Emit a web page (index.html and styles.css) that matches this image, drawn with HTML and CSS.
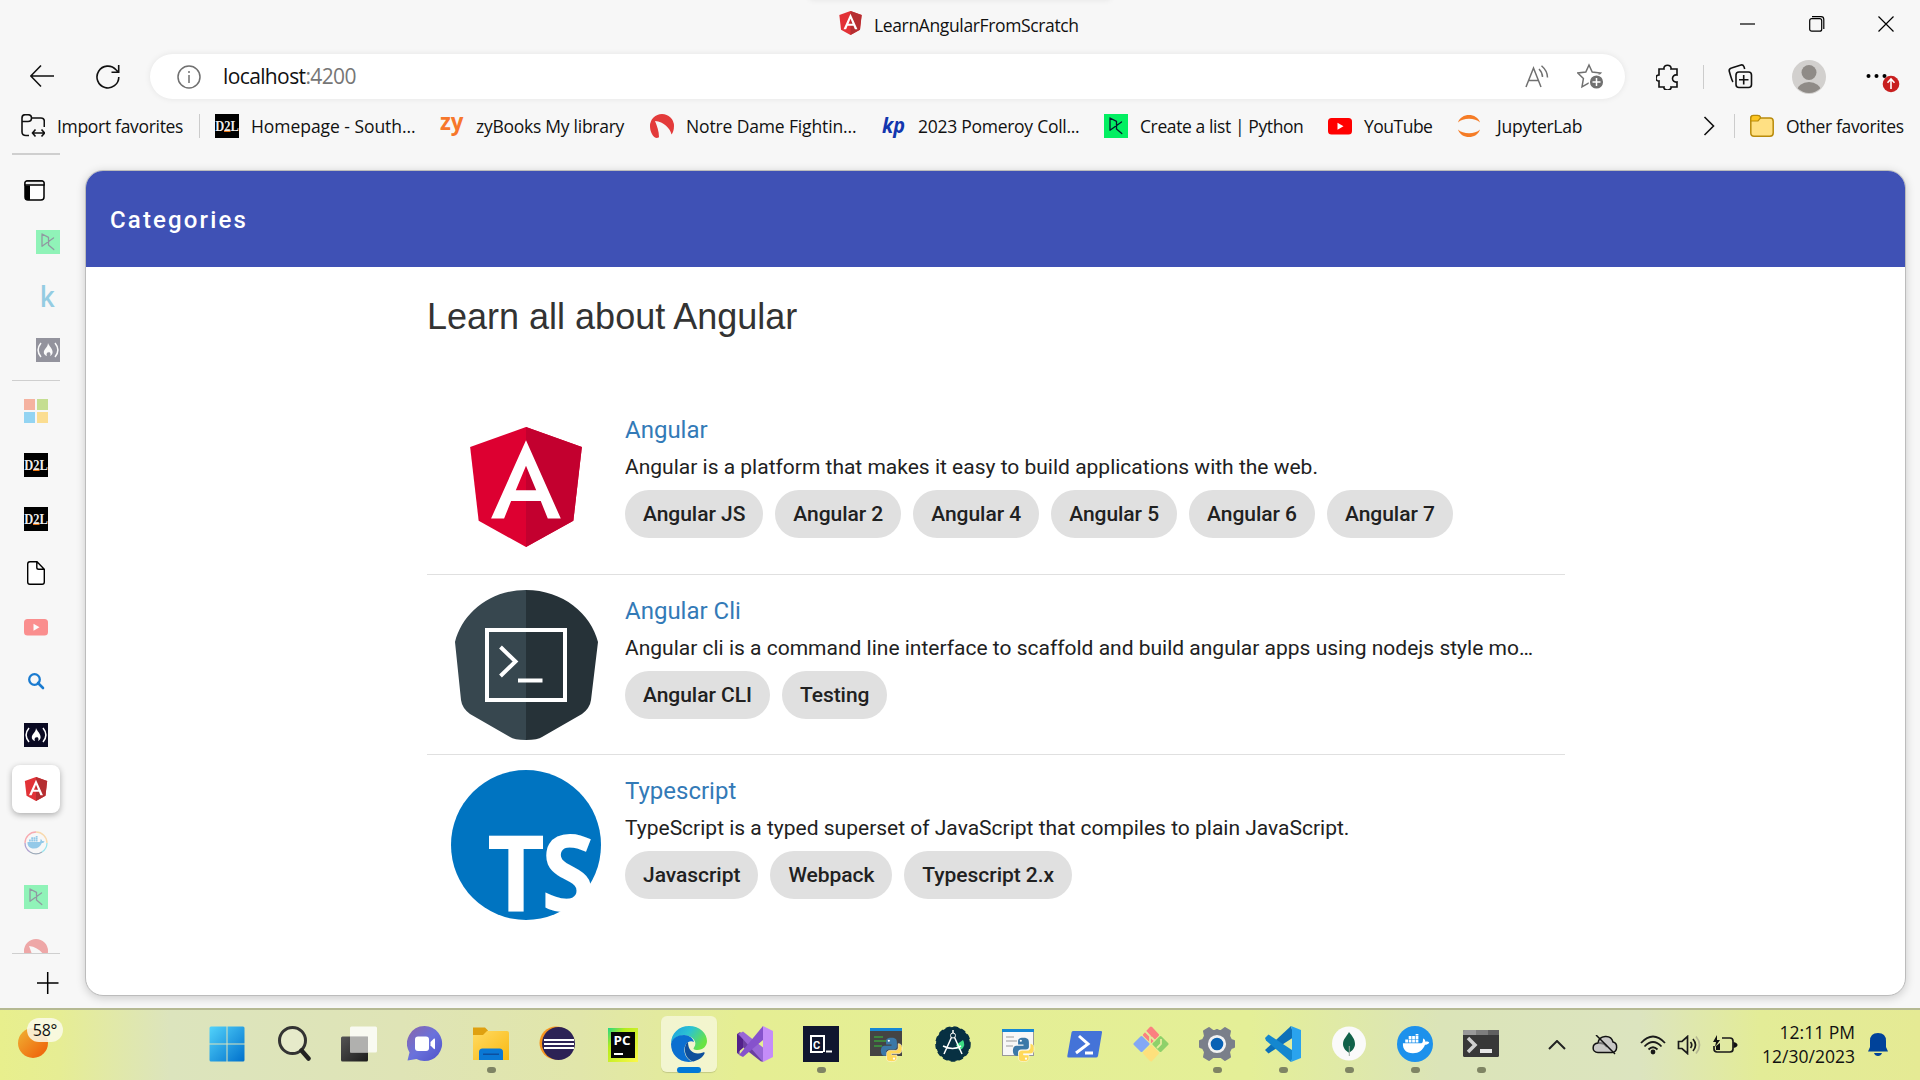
FILE: index.html
```html
<!DOCTYPE html>
<html lang="en">
<head>
<meta charset="utf-8">
<title>LearnAngularFromScratch</title>
<link rel="stylesheet" href="styles.css">
</head>
<body>
<svg class="defs" width="0" height="0" aria-hidden="true">
  <symbol id="angular" viewBox="30 30 190 200"><path fill="#e23237" d="M125 30 31.900 63.200l14.200 123.100L125 230l78.900-43.700 14.200-123.100z"/><path fill="#b52e31" d="M125 30v200l78.900-43.700 14.200-123.100z"/><path fill="#fff" d="M125 52 67 182.600h21.700l11.700-29.200h49.400l11.700 29.200H183zm17 83.400h-34l17-41z"/></symbol>
  <symbol id="dc" viewBox="0 0 24 24"><rect width="24" height="24" fill="#03ef62"/><path d="M6 4v12.300L17.500 8M6 4l6.500 3.300V15l5.300 4.600" fill="none" stroke="#05192d" stroke-width="1.300" stroke-linejoin="round" stroke-linecap="round"/></symbol>
  <symbol id="d2l" viewBox="0 0 24 24"><rect width="24" height="24"/><rect x="9" y="16" width="6.500" height="2" fill="#e87511"/><text x="0.200" y="17" textLength="23.600" lengthAdjust="spacingAndGlyphs" font-family="Liberation Serif, serif" font-size="14" font-weight="bold" fill="#eee">D2L</text></symbol>
  <symbol id="fcc" viewBox="0 0 24 24"><rect width="24" height="24" fill="#0a0a23"/><path d="M5 5Q-.800 12 5 19M19 5q5.800 7 0 14" fill="none" stroke="#fff" stroke-width="1.500"/><path fill="#fff" d="M12 5c1 3 5 6 4.600 9.500-.200 2-1.300 3-2.600 3.500 1-2 .500-3-.600-4-.400 1-.800 1-1-.200C10.800 15 10 16 11 18c-2-.500-3.400-2-3.200-4 .200-3 4-4.500 4.200-9z"/></symbol>
  <symbol id="yt" viewBox="0 0 24 24"><rect y="4" width="24" height="16.500" rx="3.500" fill="#f00"/><path fill="#fff" d="m9.500 8.700 6 3.500-6 3.500z"/></symbol>
  <symbol id="nd" viewBox="0 0 24 24"><path fill="#e33b3b" d="M0 12a12 12 0 0 1 24 0c0 4-1 6.500-2.500 8.500C20 14 14 8 5 7c2 5 4 10 4 16.200-1.500 1-3 1-4 .300C1.500 21 0 16 0 12z"/></symbol>
  <symbol id="python" viewBox="0 0 30 30"><path fill="#3b78a8" d="M15 1C8 1 8.500 4 8.500 7v2H15v1.500H6c-5 0-5 12 0 12h2.500v-4c0-2 1.500-3.500 3.500-3.500h6c2 0 3.500-1 3.500-3V7c0-3-.500-6-6.500-6z"/><path fill="#ffd95a" stroke="#fff" stroke-width=".6" d="M15 29.500c7 0 6.500-3 6.500-6v-2H15V20h9c5 0 5-12 0-12h-1v4.500c0 2-1.500 3.500-3.500 3.500h-6C11 16 9 17.500 9 20v4c0 3 0 5.500 6 5.500z"/><circle cx="11.800" cy="4.500" r="1.300" fill="#fff"/><circle cx="18" cy="26" r="1.300" fill="#fff"/></symbol>
  <symbol id="whale" viewBox="0 0 36 26"><path d="M1 12h24c2 0 2-3 2.200-6 2 .800 3 2.500 3 4 1.800-.500 4-.200 5 1-1.400 2.500-3.500 3-5.500 3C27 21 22 25 14 25 5 25 .500 20 1 12zM4 7h3.600v4H4zm4.500 0h3.600v4H8.500zM13 7h3.600v4H13zm4.500 0h3.600v4h-3.600zM8.500 2.700h3.600v3.700H8.500zm4.500 0h3.600v3.700H13zm4.500 0h3.600v3.700h-3.600zm0-2.700h3.600v2h-3.600z"/></symbol>
  <linearGradient id="gwin" x1="0" y1="0" x2="1" y2="1"><stop offset="0" stop-color="#52d3fb"/><stop offset="1" stop-color="#0070cc"/></linearGradient>
  <linearGradient id="gchat" x1="0" y1="0" x2="1" y2="1"><stop offset="0" stop-color="#8a64a8"/><stop offset=".5" stop-color="#6a72dc"/><stop offset="1" stop-color="#4f52c8"/></linearGradient>
  <linearGradient id="gfold" x1="0" y1="0" x2="1" y2="1"><stop offset="0" stop-color="#ffda62"/><stop offset="1" stop-color="#f9b912"/></linearGradient>
  <linearGradient id="gdark" x1="0" y1="0" x2="1" y2="1"><stop offset="0" stop-color="#555"/><stop offset="1" stop-color="#1c1c1c"/></linearGradient>
  <linearGradient id="gedge" x1="0" y1="0" x2="1" y2=".5"><stop offset="0" stop-color="#1b9de2"/><stop offset=".5" stop-color="#2cc3d2"/><stop offset="1" stop-color="#68e344"/></linearGradient>
  <linearGradient id="gsun" x1="0" y1="0" x2="1" y2="1"><stop offset="0" stop-color="#f0b435"/><stop offset=".8" stop-color="#ef6c0f"/></linearGradient>
  <linearGradient id="gpc" x1="0" y1="0" x2="1" y2="1"><stop offset="0" stop-color="#21d789"/><stop offset=".3" stop-color="#b6ec1b"/><stop offset="1" stop-color="#fcf84a"/></linearGradient>
</svg>

<header class="chrome">
  <div class="titlebar">
    <div class="peek"></div>
    <div class="page-title"><svg width="23" height="24"><use href="#angular"/></svg><span>LearnAngularFromScratch</span></div>
    <div class="window-buttons">
      <svg width="16" height="16" class="line"><path d="M0 8h15"/></svg>
      <svg width="16" height="16" class="line"><rect x=".7" y="2.700" width="12" height="12.500" rx="2"/><path d="M3 .700h9q2.800 0 2.800 2.800V13"/></svg>
      <svg width="16" height="16" class="line"><path d="m.500.500 15 15m0-15-15 15"/></svg>
    </div>
  </div>

  <div class="toolbar">
    <svg class="back line2" width="24" height="24"><path d="M11 1.500.800 12 11 22.500M.800 12H24"/></svg>
    <svg class="reload line2" width="24" height="24"><path d="M22.800 12A10.900 10.900 0 1 1 20 4.700l2.500 2.500M22.700 0v7.300h-7.200"/></svg>
    <div class="address">
      <svg width="24" height="24" class="info"><circle cx="12" cy="12" r="11"/><path d="M12 10v8M12 6v2"/></svg>
      <span class="url">localhost<i>:4200</i></span>
      <svg width="24" height="24" class="read"><path d="m1 22 7.500-19L16 22M3.500 15.500h10M14 4q3.500 3.500 3.500 8M16.500.800Q22.500 6 22.500 12.500"/></svg>
      <svg width="27" height="27" class="star"><path d="m12 2 3.200 7 8.300 1-6 5.500 1.500 8-7-3.700-7 4 1.400-8.300L.800 10l8-1z"/><circle cx="19.500" cy="19" r="7.300" fill="#707070" stroke="#fff"/><path stroke="#fff" d="M15.500 19h8m-4-4v8"/></svg>
    </div>
    <svg class="ext line2" width="24" height="26"><path d="M3 5h5c-1-5 8-5 7 0h6v6c-6-1-6 8 0 7v5h-6c1 4-8 4-7 0H3v-6c-4 .500-4-6 0-6z"/></svg>
    <i class="vr"></i>
    <svg class="collect line2" width="26" height="26"><rect x="8" y="8" width="15.500" height="15.500" rx="3"/><path d="M15.700 11v9.500M11 15.700h9.500M5 18Q4 17 1.200 7 1 4.500 3.500 4L13 1q2-.500 3 1.800l.700 2.200"/></svg>
    <svg class="avatar" width="34" height="34"><clipPath id="av"><circle cx="17" cy="17" r="16"/></clipPath><circle cx="17" cy="17" r="17" fill="#d2d0ce"/><g clip-path="url(#av)" fill="#8f8b87"><circle cx="17" cy="12.500" r="7.500"/><ellipse cx="17" cy="31" rx="12" ry="9"/></g></svg>
    <svg class="more" width="34" height="26"><circle cx="2.500" cy="9" r="2"/><circle cx="10.500" cy="9" r="2"/><circle cx="18.500" cy="9" r="2"/><circle cx="25" cy="17" r="8.300" fill="#c81f1f"/><path d="M25 22v-9.500m-3.500 3.300L25 12l3.500 3.800" stroke="#fff" stroke-width="1.600" fill="none"/></svg>
  </div>

  <nav class="bookmarks">
    <a class="w1"><svg width="24" height="24" class="line2"><path d="M8 21.500H5Q1 21.500 1 18V4Q1 .700 4 .700h3Q10.500.700 10.500 4H20q3.300 0 3.300 3.300V13M1 7.500h6q3.500 0 3.500-3.500M11.500 19h12m-9-3.500L11.500 19l3 3.500m6-7 3 3.500-3 3.500"/></svg><span class="s1">Import favorites</span></a>
    <i class="vr"></i>
    <a class="w2"><svg width="24" height="24"><use href="#d2l"/></svg><span class="s2">Homepage - South...</span></a>
    <a class="w3"><svg width="24" height="24"><text x="0" y="16" textLength="23.500" lengthAdjust="spacingAndGlyphs" font-family="Open Sans, sans-serif" font-size="24" font-weight="bold" fill="#f7772b">zy</text></svg><span class="s3">zyBooks My library</span></a>
    <a class="w4"><svg width="24" height="24"><use href="#nd"/></svg><span class="s4">Notre Dame Fightin...</span></a>
    <a class="w5"><svg width="24" height="24"><text x="0" y="19" textLength="23" lengthAdjust="spacingAndGlyphs" font-family="Open Sans, sans-serif" font-size="21" font-style="italic" font-weight="bold" fill="#1236ae">kp</text></svg><span class="s5">2023 Pomeroy Coll...</span></a>
    <a class="w6"><svg width="24" height="24"><use href="#dc"/></svg><span class="s6">Create a list | Python</span></a>
    <a class="w7"><svg width="24" height="24"><use href="#yt"/></svg><span class="s7">YouTube</span></a>
    <a class="w8"><svg width="24" height="24"><path fill="#f57c26" d="M1 8.500C4-1.500 20-1.500 23 8.500 18 3.500 6 3.500 1 8.500zm0 7c5 5 17 5 22 0-3 10-19 10-22 0z"/></svg><span class="s8">JupyterLab</span></a>
    <svg width="12" height="20" class="line2 chev"><path d="m1.500 1 9 9-9 9"/></svg>
    <i class="vr"></i>
    <a class="w9"><svg width="24" height="24"><path fill="#ffe083" stroke="#b98b0c" stroke-width="1.500" d="M.800 4.500Q.800 1.500 3.500 1.500h4Q10 1.500 10 4h10q3.200 0 3.200 3.200V19q0 3.200-3.200 3.200H4Q.800 22.200.800 19z"/><path fill="#fcc520" stroke="#b98b0c" stroke-width="1.200" d="M.800 7V4.500q0-3 2.700-3h4Q10.500 1.500 10.500 4L8 7z"/></svg><span class="s9">Other favorites</span></a>
  </nav>
</header>

<div class="workspace">
  <aside class="tabs">
    <hr class="thick">
    <div class="tab-toggle"><svg width="22" height="22"><rect x="1" y="1" width="19" height="19" rx="3" fill="#fff" stroke="#000" stroke-width="1.500"/><path d="M1 5h19v-2q0-2-2-2H3Q1 1 1 3z" fill="#eee" stroke="#000" stroke-width="1.300"/><path d="M1 5.500h5V20H3q-2 0-2-2z"/></svg></div>
    <div class="tab pinned faded"><svg width="24" height="24"><use href="#dc"/></svg></div>
    <div class="tab pinned"><svg width="24" height="24"><text x="3.800" y="22.500" font-family="Open Sans, sans-serif" font-size="28" font-weight="600" textLength="15" lengthAdjust="spacingAndGlyphs" fill="#94cce2">k</text></svg></div>
    <div class="tab pinned faded"><svg width="24" height="24"><use href="#fcc"/></svg></div>
    <hr class="mid">
    <div class="tab-list">
      <div class="tab"><svg width="24" height="24"><path fill="#f5b2a0" d="M0 0h11v11H0z"/><path fill="#c5de91" d="M13 0h11v11H13z"/><path fill="#93d4f2" d="M0 13h11v11H0z"/><path fill="#fbdd91" d="M13 13h11v11H13z"/></svg></div>
      <div class="tab"><svg width="24" height="24"><use href="#d2l"/></svg></div>
      <div class="tab"><svg width="24" height="24"><use href="#d2l"/></svg></div>
      <div class="tab"><svg width="24" height="24"><path d="M3.700 3q0-2.200 2.200-2.200H13l7.300 7.500V21q0 2.200-2.200 2.200H5.900Q3.700 23.200 3.700 21zM12.800 1v5.500q0 1.800 1.800 1.800h5.500" fill="#fff" stroke="#000" stroke-width="1.400"/></svg></div>
      <div class="tab faded"><svg width="24" height="24"><use href="#yt"/></svg></div>
      <div class="tab"><svg width="24" height="24"><circle cx="10.500" cy="10.500" r="5.300" fill="none" stroke="#1a7bd0" stroke-width="2.300"/><path d="m14 14 5 5" stroke="#1a7bd0" stroke-width="2.600" stroke-linecap="round"/></svg></div>
      <div class="tab"><svg width="24" height="24"><use href="#fcc"/></svg></div>
      <div class="tab active"><svg width="24" height="24"><use href="#angular"/></svg></div>
      <div class="tab"><svg width="24" height="24"><g fill="none" stroke-width="1.300"><path stroke="#f7abb0" d="M1 12A11 11 0 0 1 12 1"/><path stroke="#f8d9ae" d="M12 1a11 11 0 0 1 11 11"/><path stroke="#9ae4ed" d="M23 12a11 11 0 0 1-5 9"/><path stroke="#9ba9b8" d="M18 21a11 11 0 0 1-12 0"/><path stroke="#b0a3d0" d="M6 21a11 11 0 0 1-5-9"/></g><use href="#whale" x="3" y="4.500" width="18" height="14" fill="#94c9e8"/></svg></div>
      <div class="tab faded"><svg width="24" height="24"><use href="#dc"/></svg></div>
      <div class="tab faded"><svg width="24" height="24"><use href="#nd"/></svg></div>
    </div>
    <hr>
    <svg class="plus" width="22" height="22"><path d="M0 11h21.500M10.700 0v22" stroke="#000" stroke-width="1.500"/></svg>
  </aside>

  <main class="page">
    <div class="page-bar">Categories</div>
    <section class="content">
      <h1>Learn all about Angular</h1>
      <article class="item">
        <svg width="150" height="150" viewBox="0 0 250 250"><path fill="#dd0031" d="M125 30 31.900 63.200l14.200 123.100L125 230l78.900-43.700 14.200-123.100z"/><path fill="#c3002f" d="M125 30v200l78.900-43.700 14.200-123.100z"/><path fill="#fff" d="M125 52.100 66.800 182.600h21.700l11.700-29.200h49.400l11.700 29.200H183zm17 83.300h-34l17-40.900z"/></svg>
        <div class="info-col"><h2>Angular</h2><p>Angular is a platform that makes it easy to build applications with the web.</p>
          <div class="chips"><span>Angular JS</span><span>Angular 2</span><span>Angular 4</span><span>Angular 5</span><span>Angular 6</span><span>Angular 7</span></div></div>
      </article>
      <article class="item">
        <svg width="150" height="150"><path fill="#37474f" d="M75 0C38 0 11 24 4 52l6 58q1 8 9 14l40 23q4 3 16 3z"/><path fill="#263238" d="M75 0c37 0 65 24 72 52l-7 58q-1 8-9 14l-40 23q-4 3-16 3z"/><rect x="36" y="40" width="78" height="70" fill="none" stroke="#fff" stroke-width="4"/><path d="m49.500 57 15 14.500L49.500 86M67 90.500h24.500" fill="none" stroke="#fff" stroke-width="4"/></svg>
        <div class="info-col"><h2>Angular Cli</h2><p>Angular cli is a command line interface to scaffold and build angular apps using nodejs style modules</p>
          <div class="chips"><span>Angular CLI</span><span>Testing</span></div></div>
      </article>
      <article class="item">
        <svg width="150" height="150"><circle cx="75" cy="75" r="75" fill="#0074c1"/><g font-family="Open Sans, sans-serif" font-weight="bold" font-size="105" fill="#fff"><text x="36" y="141" textLength="58" lengthAdjust="spacingAndGlyphs">T</text><text x="90" y="141" textLength="54" lengthAdjust="spacingAndGlyphs">S</text></g></svg>
        <div class="info-col"><h2>Typescript</h2><p>TypeScript is a typed superset of JavaScript that compiles to plain JavaScript.</p>
          <div class="chips"><span>Javascript</span><span>Webpack</span><span>Typescript 2.x</span></div></div>
      </article>
    </section>
  </main>
</div>

<footer class="taskbar">
  <div class="weather"><svg width="30" height="30"><circle cx="15" cy="15" r="15" fill="url(#gsun)"/></svg><span>58°</span></div>
  <div class="apps">
    <div class="app"><svg width="36" height="36" fill="url(#gwin)"><path d="M2 .500h15.500v17H.500V2Q.500.500 2 .500zM18.500.500H34q1.500 0 1.500 1.500v15.500h-17zM.500 18.500h17v17H2Q.500 35.500.500 34zM18.500 18.500h17V34q0 1.500-1.500 1.500H18.500z"/></svg></div>
    <div class="app"><svg width="36" height="36"><circle cx="17.500" cy="14.500" r="13" fill="#e6eaca" stroke="#333" stroke-width="3"/><path d="m26.500 24.500 7 8" stroke="#222" stroke-width="4.500" stroke-linecap="round"/></svg></div>
    <div class="app"><svg width="36" height="36"><rect x="0" y="10.500" width="27" height="25" rx="1.500" fill="url(#gdark)"/><rect x="9" y=".5" width="27" height="26" rx="1.500" fill="#fff" opacity=".82"/><path fill="#b0b0ae" d="M9 10.500h18v16H9z"/></svg></div>
    <div class="app"><svg width="36" height="36"><path fill="url(#gchat)" d="M17.500 0a17.500 17.500 0 1 1-8 33L.500 34.500l2-8A17.500 17.500 0 0 1 17.500 0z"/><rect x="8" y="10.500" width="14" height="14.500" rx="3" fill="#fff"/><path fill="#fff" d="m23.500 16 3.500-3.500q1-.500 1 1v8.500q0 1.500-1 1L23.500 19.500z"/></svg></div>
    <div class="app dot"><svg width="36" height="36"><path fill="#dfa010" d="M0 1.500h12l3 3v6H0z"/><path fill="url(#gfold)" d="M0 9h10l4-4h20q2 0 2 2v27H0z"/><path fill="#0a78d4" d="M6 34V26q0-3.500 3.500-3.500h17Q30 22.500 30 26v8z"/><path fill="#0c4f9e" d="M10 27.500h16V29H10z"/></svg></div>
    <div class="app"><svg width="36" height="36"><circle cx="17" cy="17" r="16.500" fill="#f7941e"/><circle cx="19.500" cy="17.500" r="16.500" fill="#2c2255"/><path d="M5 14h30M5 18h30M5 22h30" stroke="#fff" stroke-width="1.800"/></svg></div>
    <div class="app"><svg width="36" height="36"><rect x="3" y="2" width="30" height="34" fill="url(#gpc)"/><rect x="6" y="6" width="24" height="26" fill="#050505"/><path d="M9 28h9" stroke="#fff" stroke-width="2"/><text x="8.500" y="19" font-family="Open Sans, sans-serif" font-size="13" font-weight="bold" fill="#fff" textLength="17" lengthAdjust="spacingAndGlyphs">PC</text></svg></div>
    <div class="app current"><svg width="36" height="36"><path fill="url(#gedge)" d="M0 18C0 7 8 0 18 0c11 0 18 7.500 18 15 0 5-4 9-9.500 9-4 0-4.500-1.500-3.500-2.500 4-5-1-12-9-12C7 9.500 1.500 12 0 18z"/><path fill="#0b6fd0" d="M0 18c1-6 7-9 13-9 5 0 9 3 10 7-3-1.500-6.500-.500-8.500 3C11 26 16 34.500 22 35.500 9 38 0 29 0 18z"/><path fill="#0e4f9c" d="M17 16c-5 3-4.500 17 5.500 19.500C28 34 32 31 33.500 27.500c.500-1-.500-1.500-1.500-1-8 3-15-1-15-10.500z"/></svg></div>
    <div class="app"><svg width="36" height="36"><path fill="#6b3fa0" d="m0 8 3-2L28 31l-2 4.500h-2L3 19 2.500 29 0 27z"/><path fill="#52218a" d="M0 8v19l6-5V13z"/><path fill="#9867d6" d="M26 0v36L1.500 8 6 5.500l20 16z"/><path fill="#8652cc" d="m26 0-24 29 4 2L26 14z"/><path fill="#c58df8" d="m26 0 10 5v26l-10 5z"/></svg></div>
    <div class="app dot"><svg width="36" height="36"><rect width="36" height="36" fill="#10162f"/><path d="M20 26H8V10h13v16M23 25.500h6" fill="none" stroke="#fff" stroke-width="2"/><text x="10" y="23" font-family="Roboto, sans-serif" font-size="11" font-weight="bold" fill="#fff">C</text></svg></div>
    <div class="app"><svg width="36" height="36"><rect x="1" y="2" width="32" height="28" fill="#444"/><path fill="#1687d4" d="M1 2h32v3H1z"/><path d="M5 11h9M5 15h12M5 20h8" stroke="#3b9a3c" stroke-width="1.500"/><use href="#python" x="10" y="11" width="25" height="25"/></svg></div>
    <div class="app"><svg width="36" height="36"><circle cx="18" cy="18" r="17" fill="#073042" stroke="#073042" stroke-width="1.500" stroke-dasharray="5 3"/><path fill="#3ddc84" d="m21 19 7-5q3 5-1 9l-3 1z"/><path d="M18 8 9 28M18 8l9 20M8 20q10 5 18 0" fill="none" stroke="#fff" stroke-width="1.500"/><path d="M18 4v5" stroke="#fff" stroke-width="1.500"/><circle cx="18" cy="9.500" r="2.500" fill="#073042" stroke="#fff"/></svg></div>
    <div class="app"><svg width="36" height="36"><rect x="1.500" y="3.500" width="31" height="26" fill="#f7f7f7" stroke="#999"/><path fill="#1687d4" d="M1 3h32v3H1z"/><path d="M5 11h8M5 15h11M5 20h7" stroke="#bbb" stroke-width="1.500"/><use href="#python" x="10" y="11" width="25" height="25"/></svg></div>
    <div class="app"><svg width="36" height="36"><path fill="#4473d8" d="M6 5h28q1.500 0 1 1.500L31 30q-.500 1.500-2 1.500H1.500Q0 31.500.300 30L4.500 6.500Q4.700 5 6 5z"/><path d="m12 10 9 8-12 9M18 27h8" fill="none" stroke="#fff" stroke-width="3"/></svg></div>
    <div class="app"><svg width="36" height="36"><g stroke-width="3" stroke-linejoin="round"><path fill="#fb8080" stroke="#fb8080" d="m18 2 6.500 7L18 15.500 11.500 9z"/><path fill="#83a8f5" stroke="#83a8f5" d="m8.500 11.500 6.500 6.500-6.500 6.500L2 18z"/><path fill="#8ed16a" stroke="#8ed16a" d="m27.500 11.500 6.500 6.500-6.500 6.500L21 18z"/><path fill="#fde07c" stroke="#fde07c" d="m18 20.500 6.500 6.500L18 34l-6.500-7z"/></g><path d="m12 5 5 5v7M18 11l4 4M28 13v5l-4 4" fill="none" stroke="#e3ec9c" stroke-width="1.800"/></svg></div>
    <div class="app dot"><svg width="36" height="36"><path fill="#7a7f8a" stroke="#7a7f8a" stroke-width="2" stroke-linejoin="round" d="m10 2 4 3h2l2-1 2 1h2l4-3 5 3-1 5 2 4 3 1v6l-3 1-2 4 1 5-5 3-4-3h-8l-4 3-5-3 1-5-2-4-3-1v-6l3-1 2-4-1-5z"/><circle cx="18" cy="18" r="7.700" fill="#0861b4" stroke="#f2f2f2" stroke-width="2.800"/></svg></div>
    <div class="app dot"><svg width="36" height="36"><path fill="#0d70b8" d="M0 24 26 0l3 11L3.500 27.500z"/><path fill="#1487cf" d="m0 12 3.500-3.500L30 26l-4 10L1 14.500z"/><path fill="#2aa3ee" d="m26 0 10 4v28l-10 4 1-3V3z"/></svg></div>
    <div class="app dot"><svg width="36" height="36"><circle cx="18" cy="17.500" r="17" fill="#fafafa"/><path fill="#116149" d="M18 6c3 4 6 7 6 12 0 4-3 7-5.500 8.500h-1C15 25 12 22 12 18c0-5 4-8 6-12z"/><path d="M18.300 20v10" stroke="#9aa89d"/></svg></div>
    <div class="app dot"><svg width="36" height="36"><circle cx="18" cy="18" r="18" fill="#1d91ec"/><use href="#whale" x="5" y="8" width="28" height="20" fill="#fff"/></svg></div>
    <div class="app dot"><svg width="36" height="36"><rect y="4" width="36" height="27" rx="1.500" fill="#383838"/><path fill="#999" d="M1.500 4H13v5H0V5.500Q0 4 1.500 4z"/><path fill="#7d7d7d" d="M13 4h12v5H13z"/><path fill="#606060" d="M25 4h11v5H25z"/><path d="m5 12 7 7-7 7" fill="none" stroke="#d0d0d0" stroke-width="3.500"/><rect x="17" y="23" width="12" height="4" fill="#e6e6e6"/></svg></div>
  </div>
  <div class="tray">
    <svg class="t1" width="18" height="10" fill="none" stroke="#222" stroke-width="2"><path d="m1 9 8-8 8 8"/></svg>
    <svg class="t2" width="26" height="20"><path d="M6 17.500C-.500 17.500-.500 8.500 6 8c1-8 13-9 15-1 5 1 5 10-1 10.500z" fill="#c8c8c5" stroke="#111" stroke-width="1.500"/><path d="M7 8q6 0 8 4" fill="none" stroke="#777" stroke-width="2"/><path d="m4 0 19 19" stroke="#111" stroke-width="1.500"/></svg>
    <svg class="t3" width="26" height="20" fill="none" stroke="#1a1a1a" stroke-width="1.800"><path d="M1 8q12-13 24 0M4.500 11.500q8.500-9 17 0M8.500 14.500q4.500-4.500 9 0"/><circle cx="13" cy="17" r="1.500" fill="#111"/></svg>
    <svg class="t4" width="25" height="20" fill="none" stroke="#1a1a1a" stroke-width="1.700"><path d="M1.500 6.500H5L10.500 1.500v17L5 13.500H1.500zM13.500 7q2.500 3 0 6M16 4q5 6 0 12"/><path stroke="#b5b893" d="M19 1.500q7 8.500 0 17"/></svg>
    <svg class="t5" width="26" height="20" fill="none" stroke="#1a1a1a" stroke-width="1.700"><path d="M10 3h8q3 0 3 3v8q0 3-3 3H5q-3 0-3-3v-3"/><path fill="#111" stroke="none" d="M21.500 7q4 1 4 3t-4 3zM5 0 1 7h3L3 12l5-7H5zM4 15V11l4-3v7z"/></svg>
    <div class="clock"><span>12:11 PM</span><span>12/30/2023</span></div>
    <svg class="bell" width="20" height="24" fill="#00429a"><path d="M10 0q8 0 8 8v6l2 4.500H0L2 14V8q0-8 8-8zM6 20h8q-1 3-4 3t-4-3z"/></svg>
  </div>
</footer>
</body>
</html>
```
FILE: styles.css
```css
* { box-sizing: border-box; }
body {
  margin: 0;
  width: 1920px;
  height: 1080px;
  overflow: hidden;
  display: flex;
  flex-direction: column;
  background: #f7f7f7;
  font-family: "Open Sans", "Noto Sans", sans-serif;
  font-size: 17.5px;
  color: #111;
}
svg { display: block; flex: none; }
.defs { position: absolute; }
i { font-style: normal; }
.line { fill: none; stroke: #000; stroke-width: 1.2; }
.line2 { fill: none; stroke: #111; stroke-width: 1.6; }
.vr { width: 1px; height: 24px; background: #ccc; flex: none; }

/* Browser header */
.titlebar {
  position: relative;
  height: 48px;
  display: flex;
  align-items: center;
}
.peek {
  position: absolute;
  left: 810px;
  top: -5px;
  width: 300px;
  height: 4px;
  box-shadow: 0 0 6px rgba(0, 0, 0, .12);
}
.page-title {
  display: flex;
  gap: 12px;
  padding: 2px 0 0 839px;
  width: 1740px;
  white-space: nowrap;
  line-height: 28px;
  letter-spacing: -.36px;
}
.window-buttons { display: flex; gap: 53px; }
.toolbar {
  height: 57px;
  display: flex;
  align-items: center;
  padding-left: 30px;
}
.back { margin-top: -1px; }
.reload { margin-left: 42px; }
.address {
  width: 1475px;
  height: 45px;
  margin-left: 30px;
  padding: 0 21px 0 27px;
  border-radius: 23px;
  background: #fff;
  box-shadow: 0 0 6px rgba(0, 0, 0, .08);
  display: flex;
  align-items: center;
}
.info, .read, .star { fill: none; stroke: #707070; stroke-width: 1.5; }
.url {
  margin: -2px 0 0 22px;
  font-size: 21px;
  letter-spacing: -.62px;
  flex: 1;
}
.url i { color: #767676; }
.star { margin-left: 28px; }
.ext { margin: 0 23px 0 31px; }
.collect { margin-left: 24px; }
.avatar { margin-left: 38px; }
.more { margin: 7px 0 0 40px; }

/* Favorites bar */
.bookmarks {
  height: 42px;
  display: flex;
  align-items: center;
  padding-left: 21px;
}
.bookmarks a { display: flex; align-items: center; gap: 12px; white-space: nowrap; flex: none; }
.bookmarks .vr { margin-right: 15px; }
.bookmarks span { margin-top: -1px; }
.s1 { letter-spacing: -.31px; }
.s2 { letter-spacing: -.05px; }
.s3 { letter-spacing: -.26px; }
.s4 { letter-spacing: -.14px; }
.s5 { letter-spacing: -.27px; }
.s6 { letter-spacing: -.4px; }
.s7 { letter-spacing: -.5px; }
.s8 { letter-spacing: -.25px; }
.s9 { letter-spacing: -.35px; }
.w1 { width: 178px; }
.w2 { width: 225px; }
.w3 { width: 210px; }
.w4 { width: 232px; }
.w5 { width: 222px; }
.w6 { width: 224px; }
.w7 { width: 129px; }
.w8 { width: 246px; }
.w8 svg { margin-right: 4px; }
.chev { margin-right: 19px; }

/* Vertical tabs */
.workspace { height: 861px; display: flex; }
.tabs { width: 85px; padding: 6px 0 0 12px; }
.tabs hr { width: 48px; height: 1px; margin: 0; border: 0; background: #cfcfcf; }
.tabs .thick { height: 2px; }
.tabs .mid { margin: 3px 0; }
.tab-toggle { height: 60px; padding: 25px 0 0 12px; }
.tab {
  width: 48px;
  height: 54px;
  display: flex;
  align-items: center;
  justify-content: center;
}
.pinned { justify-content: flex-end; }
.faded svg { opacity: .42; }
.tab-list { height: 569px; overflow: hidden; width: 66px; margin-left: -6px; padding-left: 6px; }
.active {
  height: 48px;
  margin: 3px 0;
  border-radius: 8px;
  background: #fff;
  box-shadow: 0 2px 6px rgba(0, 0, 0, .3);
}
.plus { margin: 18px 0 0 25px; }

/* Page */
.page {
  width: 1821px;
  height: 826px;
  margin-top: 23px;
  border: 1px solid #bcbcbc;
  border-radius: 18px;
  overflow: hidden;
  background: #fff;
  box-shadow: 0 2px 10px rgba(0, 0, 0, .18);
}
.page-bar {
  height: 96px;
  padding-left: 24px;
  background: #3f51b5;
  color: #fff;
  font: 500 24px/98px Roboto, sans-serif;
  letter-spacing: 2.15px;
}
.content {
  width: 1138px;
  margin-left: 341px;
  padding-top: 30px;
  font-family: Roboto, sans-serif;
  color: #212121;
}
h1 {
  margin: 0 0 57px;
  font: 400 36px/40px "Liberation Sans", Arial, sans-serif;
  color: #333;
}
.item {
  height: 180px;
  padding: 15px 24px 0;
  display: flex;
  gap: 24px;
  border-bottom: 1px solid #e0e0e0;
}
.item:first-of-type { height: 181px; }
.item:last-child { border: 0; }
.info-col { min-width: 0; flex: 1; padding-top: 6px; }
h2 { margin: 0; font-size: 24px; line-height: 30px; font-weight: 400; color: #337ab7; }
p {
  margin: 7px 0 8px;
  font-size: 21px;
  line-height: 30px;
  overflow: hidden;
  white-space: nowrap;
  text-overflow: ellipsis;
}
.chips { display: flex; gap: 12px; }
.chips span {
  padding: 0 18px;
  border-radius: 24px;
  background: #e0e0e0;
  font-size: 21px;
  line-height: 48px;
  font-weight: 500;
  letter-spacing: -.04px;
}

/* Taskbar */
.taskbar {
  position: relative;
  height: 72px;
  border-top: 2px solid #b5b992;
  display: flex;
  background: linear-gradient(90deg, #e8ef8d 0, #e6ed94 60px, #dce4bd 170px, #dfe4b6 400px, #e1e6aa 580px, #e5ee93 740px, #e4ef97 1250px, #dbe4b8 1440px, #dce4bf 1640px, #e3ec97 1760px, #e5ea94);
}
.weather { position: relative; width: 194px; padding: 18px 0 0 18px; }
.weather span {
  position: absolute;
  left: 27px;
  top: 8px;
  width: 36px;
  height: 24px;
  border-radius: 12px;
  background: rgba(250, 250, 235, .85);
  font-size: 16px;
  line-height: 24px;
  text-align: center;
  letter-spacing: -.2px;
}
.apps { display: flex; }
.app {
  position: relative;
  width: 56px;
  height: 56px;
  margin: 6px 5px;
  padding: 10px;
  border-radius: 6px;
}
.current { background: rgba(250, 250, 235, .65); box-shadow: 0 1px 1px rgba(0, 0, 0, .15); }
.dot::after, .current::after {
  content: "";
  position: absolute;
  left: 24px;
  bottom: -1px;
  width: 9px;
  height: 6px;
  border-radius: 3px;
  background: #7f8464;
}
.current::after { left: 16px; width: 24px; background: #0078d7; }
.tray { display: flex; align-items: center; padding-left: 34px; height: 69px; }
.t2 { margin-left: 26px; }
.t3 { margin-left: 22px; }
.t4 { margin-left: 11px; }
.t5 { margin-left: 10px; }
.clock {
  width: 117px;
  margin-top: -2px;
  display: flex;
  flex-direction: column;
  text-align: right;
  font-size: 17.5px;
  line-height: 24px;
}
.bell { margin-left: 13px; }
```
